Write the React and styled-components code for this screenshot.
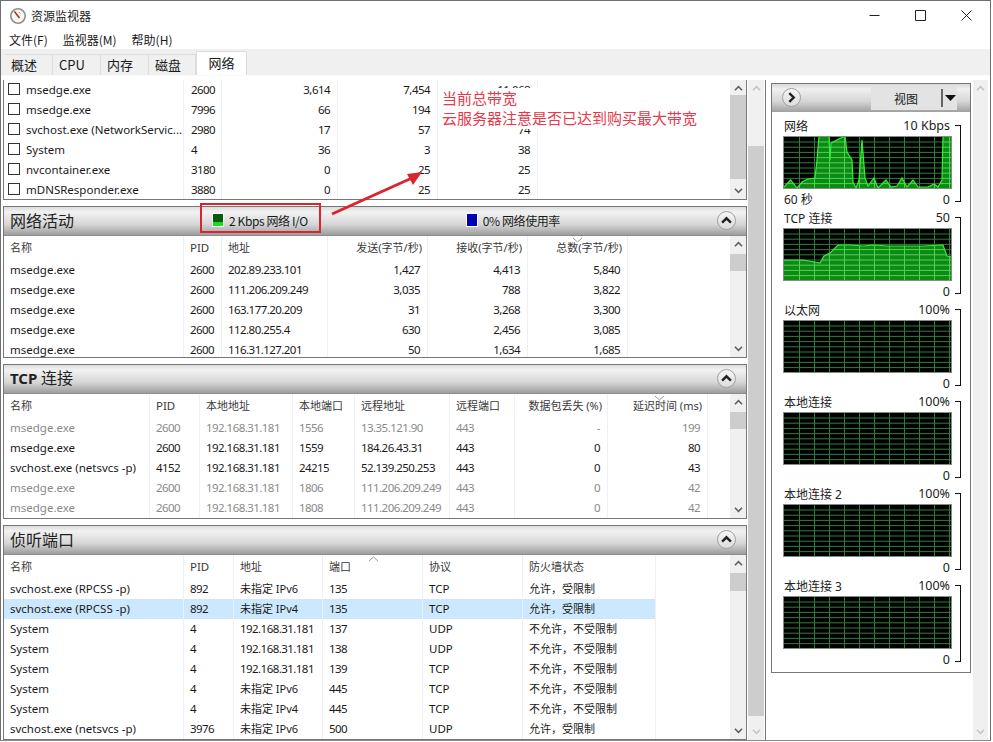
import React from 'react';
import styled, { createGlobalStyle } from 'styled-components';

const FONT = '"Noto Sans", "Noto Sans CJK SC", sans-serif';
const CJK = '"Noto Sans CJK SC", "Noto Sans", sans-serif';
const HAS_CJK = /[\u4e00-\u9fff]/;
const IS_NUMBER = /^[\d.,-]+$/;

const GlobalStyle = createGlobalStyle`
  html, body { margin: 0; padding: 0; background: #fff; }
  body { font-family: ${CJK}; font-size: 12px; color: #1a1a1a; }
  * { box-sizing: border-box; }
`;

const Window = styled.div`
  position: relative;
  width: 991px;
  height: 741px;
  border: 1px solid #6f6f6f;
  border-bottom-color: #8a8a8a;
  background: #fff;
  overflow: hidden;
  display: flex;
  flex-direction: column;
`;

const TitleBar = styled.div`
  height: 29px;
  display: flex;
  align-items: center;
  padding-left: 8px;
  flex: none;
`;
const TitleText = styled.span`
  margin-left: 4px;
  font-size: 12px;
  font-family: ${CJK};
`;
const WindowButtons = styled.div`
  margin-left: auto;
  display: flex;
  height: 29px;
  padding-right: 18px;
  gap: 35px;
  align-items: center;
`;
const MenuBar = styled.div`
  height: 19px;
  display: flex;
  align-items: center;
  padding-left: 8px;
  gap: 15px;
  flex: none;
`;
const MenuItem = styled.span`
  font-size: 12px;
`;

const TabStrip = styled.div`
  height: 27px;
  flex: none;
  background: #f0f0f0;
  display: flex;
  align-items: flex-end;
  padding-left: 4px;
  border-bottom: 1px solid #fafafa;
`;
const Tab = styled.div`
  width: ${p => p.$w}px;
  height: ${p => (p.$active ? 24 : 21)}px;
  display: flex;
  align-items: center;
  justify-content: ${p => (p.$active ? 'center' : 'flex-start')};
  padding-left: ${p => (p.$active ? 0 : 6)}px;
  padding-bottom: ${p => (p.$active ? 3 : 2)}px;
  background: ${p => (p.$active ? '#fff' : '#f0f0f0')};
  border: 1px solid #dcdcdc;
  border-left-width: ${p => (p.$active ? 1 : 0)}px;
  border-bottom: 0;
  font-size: 13px;
`;

const Body = styled.div`
  flex: 1;
  min-height: 0;
  display: flex;
  padding: 4px 0 0 2px;
`;
const LeftColumn = styled.div`
  width: 744px;
  flex: none;
  display: flex;
  flex-direction: column;
`;
const MainScrollWrap = styled.div`
  width: 18px;
  margin-left: 1px;
  flex: none;
  display: flex;
  border-right: 1px solid #777;
`;
const RightColumn = styled.div`
  margin-left: 5px;
  width: 202px;
  flex: none;
  padding-top: 3px;
`;

const TopTable = styled.div`
  height: 120px;
  flex: none;
  display: flex;
  border-left: 1px solid #777;
  border-right: 1px solid #777;
  border-bottom: 1px solid #777;
  margin-bottom: 6px;
`;
const Section = styled.section`
  flex: none;
  height: ${p => p.$h}px;
  margin-bottom: ${p => p.$mb || 0}px;
  display: flex;
  flex-direction: column;
  border: 1px solid #777;
`;
const SectionHeader = styled.header`
  height: 29px;
  flex: none;
  display: flex;
  align-items: center;
  padding: 0 10px 0 6px;
  background: linear-gradient(#dcdcdc 0%, #f2f2f2 18%, #d6d6d6 62%, #9d9d9d 100%);
  border-bottom: 1px solid #8d8d8d;
`;
const SectionTitle = styled.h2`
  margin: 0;
  padding-bottom: 3px;
  font-family: ${CJK};
  font-size: 16px;
  font-weight: 400;
  color: #222;
  line-height: 20px;
  b { font-family: ${FONT}; font-size: 15px; font-weight: 700; }
`;
const Status = styled.div`
  display: flex;
  align-items: center;
  gap: 5px;
  margin-left: ${p => p.$ml}px;
  padding-bottom: 2px;
  font-size: 12px;
  letter-spacing: -0.4px;
`;
const Swatch = styled.span`
  width: 12px;
  height: 14px;
  display: block;
  border: 1px solid #fff;
  background: ${p => p.$bg};
`;
const Collapse = styled.button`
  margin: 0 0 2px ${p => (p.$plain ? 0 : 'auto')};
  width: 19px;
  height: 19px;
  padding: 0;
  border-radius: 50%;
  border: 1px solid #a0a0a0;
  background: linear-gradient(#f6f6f6, #dcdcdc);
  display: flex;
  align-items: center;
  justify-content: center;
`;

const TableWrap = styled.div`
  flex: 1;
  min-height: 0;
  display: flex;
  background: #fff;
`;
const Rows = styled.div`
  flex: 1;
  min-width: 0;
  overflow: hidden;
`;
const Row = styled.div`
  display: flex;
  height: ${p => (p.$head ? 24 : 20)}px;
  width: max-content;
  background: ${p => (p.$selected ? '#cce8ff' : 'transparent')};
  color: ${p => (p.$dim ? '#8a8a8a' : '#1a1a1a')};
`;
const Cell = styled.div`
  position: relative;
  width: ${p => p.$w}px;
  flex: none;
  display: flex;
  align-items: center;
  justify-content: ${p => (p.$right ? 'flex-end' : 'flex-start')};
  padding: 0 ${p => (p.$head ? 5 : 7)}px 2px ${p => (p.$pl === undefined ? 6 : p.$pl)}px;
  border-right: 1px solid #eef0f3;
  white-space: nowrap;
  overflow: hidden;
  font-family: ${FONT};
  font-size: ${p => (p.$cjk ? 11 : 11.5)}px;
  letter-spacing: ${p => (p.$num ? -0.55 : 0)}px;
`;
const HeadLabel = styled.span`
  color: #3a3a3a;
`;
const Check = styled.span`
  width: 12px;
  height: 12px;
  flex: none;
  border: 1px solid #333;
  background: #fff;
  margin-right: 6px;
`;
const SortMark = styled.svg`
  position: absolute;
  left: ${p => p.$x}px;
  top: 1px;
`;

const Track = styled.div`
  width: ${p => p.$w || 16}px;
  flex: none;
  display: flex;
  flex-direction: column;
  background: #f0f0f0;
`;
const ScrollEnd = styled.div`
  height: ${p => p.$h || 17}px;
  flex: none;
  display: flex;
  align-items: center;
  justify-content: center;
`;
const ScrollMiddle = styled.div`
  flex: 1;
  min-height: 0;
`;
const Thumb = styled.div`
  margin-top: ${p => p.$top}px;
  height: ${p => p.$h}px;
  background: #cdcdcd;
`;

const Panel = styled.aside`
  width: 200px;
  height: 590px;
  border: 1px solid #777;
`;
const PanelHeader = styled.div`
  height: 28px;
  display: flex;
  align-items: center;
  padding: 0 13px 0 10px;
  background: linear-gradient(#d8d8d8 0%, #f0f0f0 18%, #d6d6d6 62%, #a0a0a0 100%);
  justify-content: space-between;
`;
const ViewButton = styled.div`
  width: 86px;
  height: 24px;
  display: flex;
  align-items: center;
  background: #e3e3e3;
  font-size: 12px;
`;
const ViewLabel = styled.span`
  flex: 1;
  text-align: center;
  font-family: ${CJK};
`;
const ViewArrow = styled.span`
  width: 16px;
  height: 18px;
  border-left: 2px solid #666;
  display: flex;
  align-items: center;
  justify-content: center;
`;
const Charts = styled.div`
  padding: 5px 0 0 11px;
`;
const ChartBlock = styled.div`
  height: 92px;
  display: flex;
`;
const ChartBody = styled.div`
  width: 169px;
  flex: none;
`;
const ChartLine = styled.div`
  height: ${p => p.$h}px;
  display: flex;
  justify-content: space-between;
  align-items: center;
  padding: 0 2px ${p => p.$pb || 0}px 1px;
  font-family: ${FONT};
  font-size: 12px;
  color: #222;
`;
const ChartValue = styled.span`
  font-size: 12.5px;
`;
const Bracket = styled.div`
  width: 6px;
  height: 77px;
  margin: 8px 0 0 3px;
  border: 1.5px solid #111;
  border-left: 0;
`;
const ChartSvg = styled.svg`
  display: block;
`;

/* annotations pasted over the screenshot */
const NoteBox = styled.div`
  position: absolute;
  left: 439px;
  top: 87px;
  width: 262px;
  height: 41px;
  padding-left: 2px;
  background: #fff;
  color: #e8394b;
  font-family: ${CJK};
  font-size: 15px;
  line-height: 19.5px;
`;
const RedBox = styled.div`
  position: absolute;
  left: 199px;
  top: 202px;
  width: 121px;
  height: 30px;
  border: 2px solid #d9252e;
`;
const ArrowSvg = styled.svg`
  position: absolute;
  left: 325px;
  top: 160px;
`;

const CHEVRON_PATHS = {
  up: 'M1 7 L5 3 L9 7',
  down: 'M1 3 L5 7 L9 3',
  right: 'M3 1 L7 5 L3 9',
};

const Chevron = ({ dir = 'down', color = '#606060', size = 9, w = 1.6 }) => (
  <svg width={size} height={size} viewBox="0 0 10 10" fill="none">
    <path d={CHEVRON_PATHS[dir]} stroke={color} strokeWidth={w * 1.1} />
  </svg>
);

const Scrollbar = ({ top = 0, height = 0, w, pale }) => (
  <Track $w={w}>
    <ScrollEnd>
      <Chevron dir="up" color={pale ? '#c4c4c4' : '#606060'} />
    </ScrollEnd>
    <ScrollMiddle>{height > 0 && <Thumb $top={top} $h={height} />}</ScrollMiddle>
    <ScrollEnd>
      <Chevron color={pale ? '#c4c4c4' : '#606060'} />
    </ScrollEnd>
  </Track>
);

const CollapseButton = () => (
  <Collapse type="button" aria-label="collapse">
    <Chevron dir="up" color="#222" size={11} w={2} />
  </Collapse>
);

const AppIcon = () => (
  <svg width="18" height="18" viewBox="0 0 18 18">
    <circle cx="9" cy="9" r="7.2" fill="#fbf7f3" stroke="#8f8f8f" strokeWidth="1.6" />
    <path d="M5.5 4.5 L10.5 11" stroke="#b3262c" strokeWidth="1.5" />
    <path d="M10 5 L11.5 6.5" stroke="#999" strokeWidth="1" />
  </svg>
);

const WindowIcon = ({ d }) => (
  <svg width="11" height="11" viewBox="0 0 11 11" fill="none">
    <path d={d} stroke="#222" strokeWidth="1" />
  </svg>
);

const TABS = [
  ['概述', 48],
  ['CPU', 48],
  ['内存', 48],
  ['磁盘', 47],
  ['网络', 51, true],
];

const TOP_COLS = [180, 38, 116, 100, 100];
const TOP_ROWS = [
  ['msedge.exe', '2600', '3,614', '7,454', '11,068'],
  ['msedge.exe', '7996', '66', '194', '260'],
  ['svchost.exe (NetworkServic...', '2980', '17', '57', '74'],
  ['System', '4', '36', '3', '38'],
  ['nvcontainer.exe', '3180', '0', '25', '25'],
  ['mDNSResponder.exe', '3880', '0', '25', '25'],
];

const NET = {
  cols: [180, 38, 106, 100, 100, 100],
  right: [3, 4, 5],
  head: ['名称', 'PID', '地址', '发送(字节/秒)', '接收(字节/秒)', '总数(字节/秒)'],
  sort: { col: 5, x: 44, up: false },
  rows: [
    ['msedge.exe', '2600', '202.89.233.101', '1,427', '4,413', '5,840'],
    ['msedge.exe', '2600', '111.206.209.249', '3,035', '788', '3,822'],
    ['msedge.exe', '2600', '163.177.20.209', '31', '3,268', '3,300'],
    ['msedge.exe', '2600', '112.80.255.4', '630', '2,456', '3,085'],
    ['msedge.exe', '2600', '116.31.127.201', '50', '1,634', '1,685'],
  ],
};

const TCP = {
  cols: [146, 50, 93, 62, 95, 65, 93, 100],
  right: [6, 7],
  head: ['名称', 'PID', '本地地址', '本地端口', '远程地址', '远程端口', '数据包丢失 (%)', '延迟时间 (ms)'],
  sort: { col: 7, x: 46, up: false },
  rows: [
    { dim: true, c: ['msedge.exe', '2600', '192.168.31.181', '1556', '13.35.121.90', '443', '-', '199'] },
    { c: ['msedge.exe', '2600', '192.168.31.181', '1559', '184.26.43.31', '443', '0', '80'] },
    { c: ['svchost.exe (netsvcs -p)', '4152', '192.168.31.181', '24215', '52.139.250.253', '443', '0', '43'] },
    { dim: true, c: ['msedge.exe', '2600', '192.168.31.181', '1806', '111.206.209.249', '443', '0', '42'] },
    { dim: true, c: ['msedge.exe', '2600', '192.168.31.181', '1808', '111.206.209.249', '443', '0', '42'] },
  ],
};

const LISTEN = {
  cols: [180, 50, 89, 100, 100, 133],
  right: [],
  head: ['名称', 'PID', '地址', '端口', '协议', '防火墙状态'],
  sort: { col: 3, x: 45, up: true },
  rows: [
    ['svchost.exe (RPCSS -p)', '892', '未指定 IPv6', '135', 'TCP', '允许，受限制'],
    { selected: true, c: ['svchost.exe (RPCSS -p)', '892', '未指定 IPv4', '135', 'TCP', '允许，受限制'] },
    ['System', '4', '192.168.31.181', '137', 'UDP', '不允许，不受限制'],
    ['System', '4', '192.168.31.181', '138', 'UDP', '不允许，不受限制'],
    ['System', '4', '192.168.31.181', '139', 'TCP', '不允许，不受限制'],
    ['System', '4', '未指定 IPv6', '445', 'TCP', '不允许，不受限制'],
    ['System', '4', '未指定 IPv4', '445', 'TCP', '不允许，不受限制'],
    ['svchost.exe (netsvcs -p)', '3976', '未指定 IPv6', '500', 'UDP', '允许，受限制'],
  ],
};

const NET_POINTS = [
  [0, 52], [7.6, 44], [14, 52], [19, 46], [25, 43], [32, 42], [34, 24], [36, 0], [46, 0], [47, 24],
  [48, 7], [62, 0], [64, 16], [69, 24], [70, 46], [73, 52], [76, 44], [79, 4], [82, 42], [85, 50],
  [91, 42], [95, 52], [103, 44], [108, 51], [114, 50], [119, 42], [124, 51], [130, 44], [135, 51],
  [145, 51], [151, 48], [155, 51], [159, 44], [160, 0], [169, 0],
];
const TCP_POINTS = [
  [0, 32], [20, 32], [32, 34], [37, 35], [41, 28], [47, 25], [55, 17], [67, 17], [80, 18], [90, 17],
  [105, 18], [125, 18], [140, 18], [160, 17], [164, 28], [169, 29],
];

const CHARTS = [
  { id: 'net', title: '网络', max: '10 Kbps', left: '60 秒', points: NET_POINTS },
  { id: 'tcp', title: 'TCP 连接', max: '50', points: TCP_POINTS },
  { id: 'eth', title: '以太网', max: '100%' },
  { id: 'lan1', title: '本地连接', max: '100%' },
  { id: 'lan2', title: '本地连接 2', max: '100%' },
  { id: 'lan3', title: '本地连接 3', max: '100%' },
];

const GRID_X = Array.from({ length: 11 }, (_, i) => 16.5 + i * 15);
const GRID_Y = Array.from({ length: 9 }, (_, i) => 6 + i * 5.2);

const GridLines = ({ color }) => (
  <g stroke={color} strokeWidth="1">
    {GRID_X.map(x => (
      <line key={x} x1={x} x2={x} y1="0" y2="53" />
    ))}
    {GRID_Y.map(y => (
      <line key={y} x1="0" x2="169" y1={y} y2={y} />
    ))}
  </g>
);

const Graph = ({ id, points }) => {
  const poly = points && `0,53 ${points.map(p => p.join(',')).join(' ')} 169,53`;
  return (
    <ChartSvg width="169" height="53" viewBox="0 0 169 53">
      <rect width="169" height="53" fill="#000" />
      {poly && <polygon points={poly} fill="#0b8a14" />}
      <GridLines color="#2f7d3c" />
      {poly && (
        <>
          <clipPath id={`clip-${id}`}>
            <polygon points={poly} />
          </clipPath>
          <g clipPath={`url(#clip-${id})`}>
            <GridLines color="#4fd24f" />
          </g>
          <polyline points={points.map(p => p.join(',')).join(' ')} fill="none" stroke="#35f035" strokeWidth="1.2" />
        </>
      )}
      <rect x="0.5" y="0.5" width="168" height="52" fill="none" stroke="#7f8f80" />
    </ChartSvg>
  );
};

const textProps = text => ({
  $cjk: HAS_CJK.test(text),
  $num: IS_NUMBER.test(text),
});

const DataTable = ({ table, scroll }) => (
  <TableWrap>
    <Rows>
      <Row $head>
        {table.head.map((h, i) => (
          <Cell key={h} $head $w={table.cols[i]} $right={table.right.includes(i)} {...textProps(h)}>
            <HeadLabel>{h}</HeadLabel>
            {table.sort.col === i && (
              <SortMark $x={table.sort.x} width="11" height="6" viewBox="0 0 11 6" fill="none">
                <path d={table.sort.up ? 'M1 5 L5.5 1 L10 5' : 'M1 1 L5.5 5 L10 1'} stroke="#9a9a9a" />
              </SortMark>
            )}
          </Cell>
        ))}
      </Row>
      {table.rows.map((r, idx) => {
        const cells = Array.isArray(r) ? r : r.c;
        return (
          <Row key={idx} $dim={r.dim} $selected={r.selected}>
            {cells.map((c, i) => (
              <Cell key={i} $w={table.cols[i]} $right={table.right.includes(i)} {...textProps(c)}>
                {c}
              </Cell>
            ))}
          </Row>
        );
      })}
    </Rows>
    <Scrollbar {...scroll} />
  </TableWrap>
);

export default function App() {
  return (
    <Window>
      <GlobalStyle />
      <TitleBar>
        <AppIcon />
        <TitleText>资源监视器</TitleText>
        <WindowButtons>
          <WindowIcon d="M0.5 5.5 H10.5" />
          <WindowIcon d="M0.5 0.5 H10.5 V10.5 H0.5 Z" />
          <WindowIcon d="M0.5 0.5 L10.5 10.5 M10.5 0.5 L0.5 10.5" />
        </WindowButtons>
      </TitleBar>
      <MenuBar>
        <MenuItem>文件(F)</MenuItem>
        <MenuItem>监视器(M)</MenuItem>
        <MenuItem>帮助(H)</MenuItem>
      </MenuBar>
      <TabStrip>
        {TABS.map(([label, w, active]) => (
          <Tab key={label} $w={w} $active={active}>
            {label}
          </Tab>
        ))}
      </TabStrip>
      <Body>
        <LeftColumn>
          <TopTable>
            <Rows>
              {TOP_ROWS.map((r, idx) => (
                <Row key={idx}>
                  {r.map((c, i) => (
                    <Cell key={i} $w={TOP_COLS[i]} $right={i > 1} $pl={i === 0 ? 4 : 7} {...textProps(c)}>
                      {i === 0 && <Check />}
                      {c}
                    </Cell>
                  ))}
                </Row>
              ))}
            </Rows>
            <Scrollbar top={-2} height={84} />
          </TopTable>
          <Section $h={152} $mb={6}>
            <SectionHeader>
              <SectionTitle>网络活动</SectionTitle>
              <Status $ml={138}>
                <Swatch $bg="linear-gradient(#0a5c0a 65%, #18e018 65%)" />
                2 Kbps 网络 I/O
              </Status>
              <Status $ml={158}>
                <Swatch $bg="#0000b4" />
                0% 网络使用率
              </Status>
              <CollapseButton />
            </SectionHeader>
            <DataTable table={NET} scroll={{ top: 1, height: 17 }} />
          </Section>
          <Section $h={155} $mb={6}>
            <SectionHeader>
              <SectionTitle>
                <b>TCP</b> 连接
              </SectionTitle>
              <CollapseButton />
            </SectionHeader>
            <DataTable table={TCP} scroll={{ top: 1, height: 17 }} />
          </Section>
          <Section $h={215}>
            <SectionHeader>
              <SectionTitle>侦听端口</SectionTitle>
              <CollapseButton />
            </SectionHeader>
            <DataTable table={LISTEN} scroll={{ top: 1, height: 18 }} />
          </Section>
        </LeftColumn>
        <MainScrollWrap>
          <Scrollbar top={49} height={570} pale />
        </MainScrollWrap>
        <RightColumn>
          <Panel>
            <PanelHeader>
              <Collapse as="span" $plain>
                <Chevron dir="right" color="#222" size={11} w={2} />
              </Collapse>
              <ViewButton>
                <ViewLabel>视图</ViewLabel>
                <ViewArrow>
                  <svg width="11" height="6" viewBox="0 0 11 6">
                    <path d="M0 0 H11 L5.5 6 Z" fill="#111" />
                  </svg>
                </ViewArrow>
              </ViewButton>
            </PanelHeader>
            <Charts>
              {CHARTS.map(c => (
                <ChartBlock key={c.id}>
                  <ChartBody>
                    <ChartLine $h={19} $pb={2}>
                      <span>{c.title}</span>
                      <ChartValue>{c.max}</ChartValue>
                    </ChartLine>
                    <Graph id={c.id} points={c.points} />
                    <ChartLine $h={20}>
                      <span>{c.left}</span>
                      <ChartValue>0</ChartValue>
                    </ChartLine>
                  </ChartBody>
                  <Bracket />
                </ChartBlock>
              ))}
            </Charts>
          </Panel>
        </RightColumn>
        <Scrollbar w={15} pale />
      </Body>

      <NoteBox>
        当前总带宽
        <br />
        云服务器注意是否已达到购买最大带宽
      </NoteBox>
      <RedBox />
      <ArrowSvg width="100" height="60" viewBox="0 0 100 60">
        <path d="M6 53 L86 17" stroke="#d9252e" strokeWidth="3" />
        <path d="M96 11 L81 13 L87 24 Z" fill="#d9252e" />
      </ArrowSvg>
    </Window>
  );
}
